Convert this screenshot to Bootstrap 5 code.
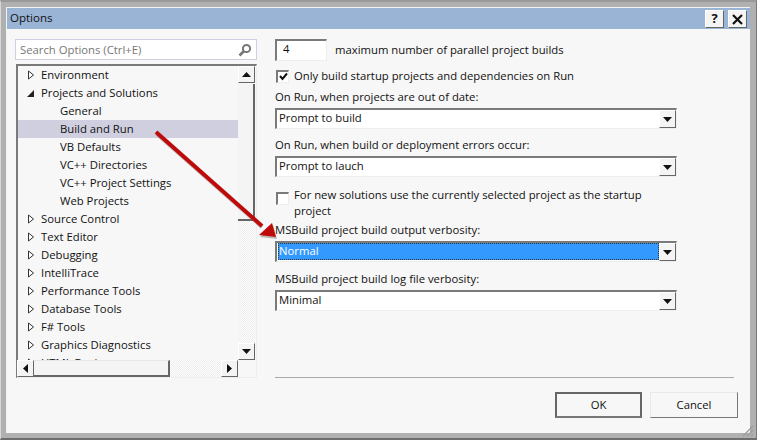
<!DOCTYPE html>
<html lang="en">
<head>
  <meta charset="UTF-8">
  <meta name="viewport" content="width=device-width, initial-scale=1.0">
  <title>Options</title>
  <link href="https://cdn.jsdelivr.net/npm/bootstrap@5.3.0/dist/css/bootstrap.min.css" rel="stylesheet">
  <style>
    html, body { height: 440px; overflow: hidden; }
    body { background: #f7f7f7; font-family: "Open Sans", "Noto Sans", sans-serif; font-size: 11.3px; line-height: 16px; color: #111; }
    .frame { width: 757px; height: 440px; background: #b0b0b0; border: solid; border-width: 2px 1px 2px 1px; border-color: #9a9a9a #777 #6e6e6e #d8d8d8; padding: 5px 6px 5px 5px; position: relative; }
    .frame-in { height: 100%; background: #f7f7f7; border-top: 1px solid #f2f2f2; border-left: 1px solid #f2f2f2; }
    .titlebar { height: 21px; background: #9ab4d6; padding: 2px 3px 0 3px; font-size: 11.5px; }
    .capbtn { width: 19px; height: 18px; background: #f4f4f4; border: 1px solid; border-color: #fff #666 #666 #fff; font-weight: 700; line-height: 15px; text-align: center; font-size: 13px; }
    .main { height: 347px; padding: 10px 0 0 8px; }
    .leftcol { width: 242px; margin-right: 18px; }
    .search { height: 21px; border: 1px solid #cfcfe3; background: #fff; padding: 0 4px; color: #777; margin-bottom: 4px; }
    .treebox { width: 241px; height: 314px; margin-left: 1px; border: solid; border-width: 2px 1px 1px 2px; border-color: #7a7a7a #eee #eee #7a7a7a; position: relative; background: #f7f7f7; }
    .treerows { width: 220px; height: 294px; overflow: hidden; }
    .treerow { height: 18px; line-height: 18px; padding-left: 23px; white-space: nowrap; }
    .treerow.sub { padding-left: 42px; }
    .treerow.sel { background: #cfcfe0; }
    .treerow svg { margin: 0 6px 0 -14px; vertical-align: -1px; }
    .dither { background-color: #f7f7f7; background-image: repeating-conic-gradient(#fff 0 25%, #ececec 0 50%); background-size: 2px 2px; }
    .sbtn { width: 17px; height: 17px; background: #f4f4f4; border: 1px solid; border-color: #fff #666 #666 #fff; flex: none; }
    .vbar { width: 17px; height: 294px; }
    .vthumb { height: 137px; flex: none; background: #f4f4f4; border-right: 2px solid #666; border-bottom: 2px solid #666; margin-top: 1px; }
    .hbar { height: 17px; width: 221px; margin-left: -1px; }
    .hthumb { width: 136px; background: #f4f4f4; border-right: 2px solid #666; border-bottom: 2px solid #666; border-top: 1px solid #e8e8e8; flex: none; }
    .rightcol { width: 402px; }
    .numbox { width: 52px; height: 22px; background: #fff; border: solid; border-width: 2px 1px 1px 2px; border-color: #7a7a7a #eee #eee #7a7a7a; padding-left: 6px; line-height: 16px; margin-right: 8px; }
    .chk { width: 13px; height: 13px; background: #fff; border: solid; border-width: 2px 1px 1px 2px; border-color: #7a7a7a #eee #eee #7a7a7a; margin: 0 5px 0 1px; flex: none; }
    .chk-low { margin-top: 5px; }
    .rowcheck { margin-top: 7px; height: 16px; }
    .lbl { height: 16px; }
    .gap-5px { margin-top: 5px; }
    .gap-8px { margin-top: 8px; }
    .gap-9px { margin-top: 9px; }
    .gap-10px { margin-top: 10px; }
    .gap-3px { margin-top: 3px; }
    .combo { height: 21px; background: #fff; border: solid; border-width: 2px 1px 1px 2px; border-color: #7a7a7a #eee #eee #7a7a7a; margin-top: 3px; }
    .combo-text { padding-left: 2px; line-height: 15px; }
    .combo-text.on { background: #3399ff; color: #fff; outline: 1px dotted #333; outline-offset: -1px; margin: 0 0 1px 1px; padding-left: 1px; }
    .combo .sbtn { height: 18px; }
    .bottom { padding: 1px 12px 0 6px; }
    .sep { border-top: 1px solid #a8a8a8; margin-left: 262px; width: 459px; margin-bottom: 14px; }
    .wbtn { width: 88px; height: 26px; background: #f7f7f7; border: 1px solid; border-color: #e8e8e8 #777 #777 #e8e8e8; line-height: 22px; text-align: center; padding: 0; color: #111; font-size: 11.3px; border-radius: 0; }
    .wbtn.def { width: 87px; border: 2px solid; border-color: #666 #666 #777 #666; }
    .grip { position: absolute; right: 2px; bottom: 1px; }
    .pointer { position: absolute; left: -1px; top: -2px; pointer-events: none; }
  </style>
</head>
<body>
<div class="frame">
  <div class="frame-in d-flex flex-column">
    <div class="titlebar d-flex justify-content-between">
      <span>Options</span>
      <div class="d-flex gap-1">
        <div class="capbtn">?</div>
        <div class="capbtn">
          <svg width="13" height="13" viewBox="0 0 13 13"><path d="M2 2l9 9M11 2l-9 9" stroke="#111" stroke-width="2.2"/></svg>
        </div>
      </div>
    </div>

    <div class="main d-flex">
      <div class="leftcol">
        <div class="search d-flex justify-content-between align-items-center">
          <span>Search Options (Ctrl+E)</span>
          <svg width="14" height="14" viewBox="0 0 14 14"><circle cx="8.5" cy="5.5" r="3.6" fill="none" stroke="#777" stroke-width="2"/><path d="M6 8L1.5 12.5" stroke="#777" stroke-width="2.6"/></svg>
        </div>
        <div class="treebox">
          <div class="d-flex">
            <div class="treerows">
              <div class="treerow"><svg width="8" height="10" viewBox="0 0 8 10"><path d="M1.5 1l5 4-5 4z" fill="#fff" stroke="#333"/></svg>Environment</div>
              <div class="treerow"><svg width="8" height="10" viewBox="0 0 8 10"><path d="M7 2v7H0z" fill="#222"/></svg>Projects and Solutions</div>
              <div class="treerow sub">General</div>
              <div class="treerow sub sel">Build and Run</div>
              <div class="treerow sub">VB Defaults</div>
              <div class="treerow sub">VC++ Directories</div>
              <div class="treerow sub">VC++ Project Settings</div>
              <div class="treerow sub">Web Projects</div>
              <div class="treerow"><svg width="8" height="10" viewBox="0 0 8 10"><path d="M1.5 1l5 4-5 4z" fill="#fff" stroke="#333"/></svg>Source Control</div>
              <div class="treerow"><svg width="8" height="10" viewBox="0 0 8 10"><path d="M1.5 1l5 4-5 4z" fill="#fff" stroke="#333"/></svg>Text Editor</div>
              <div class="treerow"><svg width="8" height="10" viewBox="0 0 8 10"><path d="M1.5 1l5 4-5 4z" fill="#fff" stroke="#333"/></svg>Debugging</div>
              <div class="treerow"><svg width="8" height="10" viewBox="0 0 8 10"><path d="M1.5 1l5 4-5 4z" fill="#fff" stroke="#333"/></svg>IntelliTrace</div>
              <div class="treerow"><svg width="8" height="10" viewBox="0 0 8 10"><path d="M1.5 1l5 4-5 4z" fill="#fff" stroke="#333"/></svg>Performance Tools</div>
              <div class="treerow"><svg width="8" height="10" viewBox="0 0 8 10"><path d="M1.5 1l5 4-5 4z" fill="#fff" stroke="#333"/></svg>Database Tools</div>
              <div class="treerow"><svg width="8" height="10" viewBox="0 0 8 10"><path d="M1.5 1l5 4-5 4z" fill="#fff" stroke="#333"/></svg>F# Tools</div>
              <div class="treerow"><svg width="8" height="10" viewBox="0 0 8 10"><path d="M1.5 1l5 4-5 4z" fill="#fff" stroke="#333"/></svg>Graphics Diagnostics</div>
              <div class="treerow"><svg width="8" height="10" viewBox="0 0 8 10"><path d="M1.5 1l5 4-5 4z" fill="#fff" stroke="#333"/></svg>HTML Designer</div>
            </div>
            <div class="vbar d-flex flex-column dither">
              <div class="sbtn d-flex align-items-center justify-content-center"><svg width="9" height="5" viewBox="0 0 9 5"><path d="M4.5 0L9 5H0z" fill="#111"/></svg></div>
              <div class="vthumb"></div>
              <div class="flex-grow-1"></div>
              <div class="sbtn d-flex align-items-center justify-content-center"><svg width="9" height="5" viewBox="0 0 9 5"><path d="M4.5 5L9 0H0z" fill="#111"/></svg></div>
            </div>
          </div>
          <div class="hbar d-flex dither">
            <div class="sbtn d-flex align-items-center justify-content-center"><svg width="5" height="9" viewBox="0 0 5 9"><path d="M0 4.5L5 0v9z" fill="#111"/></svg></div>
            <div class="hthumb"></div>
            <div class="flex-grow-1"></div>
            <div class="sbtn d-flex align-items-center justify-content-center"><svg width="5" height="9" viewBox="0 0 5 9"><path d="M5 4.5L0 0v9z" fill="#111"/></svg></div>
          </div>
        </div>
      </div>

      <div class="rightcol">
        <div class="d-flex align-items-center">
          <div class="numbox">4</div>
          <span>maximum number of parallel project builds</span>
        </div>
        <div class="rowcheck d-flex align-items-center">
          <div class="chk d-flex align-items-center justify-content-center"><svg width="9" height="9" viewBox="0 0 9 9"><path d="M1 4l2.5 3L8 1.5" fill="none" stroke="#111" stroke-width="2"/></svg></div>
          <span>Only build startup projects and dependencies on Run</span>
        </div>
        <div class="lbl gap-5px">On Run, when projects are out of date:</div>
        <div class="combo d-flex justify-content-between">
          <div class="combo-text">Prompt to build</div>
          <div class="sbtn d-flex align-items-center justify-content-center"><svg width="9" height="5" viewBox="0 0 9 5"><path d="M4.5 5L9 0H0z" fill="#111"/></svg></div>
        </div>
        <div class="lbl gap-8px">On Run, when build or deployment errors occur:</div>
        <div class="combo d-flex justify-content-between">
          <div class="combo-text">Prompt to lauch</div>
          <div class="sbtn d-flex align-items-center justify-content-center"><svg width="9" height="5" viewBox="0 0 9 5"><path d="M4.5 5L9 0H0z" fill="#111"/></svg></div>
        </div>
        <div class="d-flex gap-10px">
          <div class="chk chk-low"></div>
          <span>For new solutions use the currently selected project as the startup<br>project</span>
        </div>
        <div class="lbl gap-3px">MSBuild project build output verbosity:</div>
        <div class="combo d-flex justify-content-between">
          <div class="combo-text on flex-grow-1">Normal</div>
          <div class="sbtn d-flex align-items-center justify-content-center"><svg width="9" height="5" viewBox="0 0 9 5"><path d="M4.5 5L9 0H0z" fill="#111"/></svg></div>
        </div>
        <div class="lbl gap-9px">MSBuild project build log file verbosity:</div>
        <div class="combo d-flex justify-content-between">
          <div class="combo-text">Minimal</div>
          <div class="sbtn d-flex align-items-center justify-content-center"><svg width="9" height="5" viewBox="0 0 9 5"><path d="M4.5 5L9 0H0z" fill="#111"/></svg></div>
        </div>
      </div>
    </div>

    <div class="bottom">
      <div class="sep"></div>
      <div class="d-flex justify-content-end gap-2">
        <button type="button" class="btn wbtn def">OK</button>
        <button type="button" class="btn wbtn">Cancel</button>
      </div>
    </div>
  </div>

  <svg class="grip" width="12" height="12" viewBox="0 0 12 12"><path d="M1 11L11 1M5 11l6-6M9 11l2-2" stroke="#999" stroke-width="1.2"/></svg>

  <svg class="pointer" width="757" height="440" viewBox="0 0 757 440">
    <g fill="#7a6a6a" opacity=".45" transform="translate(1 2)">
      <path d="M156 132l105 93" stroke="#7a6a6a" stroke-width="4"/>
      <path d="M276 237l-17-2 13-12z"/>
    </g>
    <path d="M156 132l106 94" stroke="#bf0a0a" stroke-width="4"/>
    <path d="M276 237l-17-2 13-12z" fill="#bf0a0a"/>
  </svg>
</div>
</body>
</html>
